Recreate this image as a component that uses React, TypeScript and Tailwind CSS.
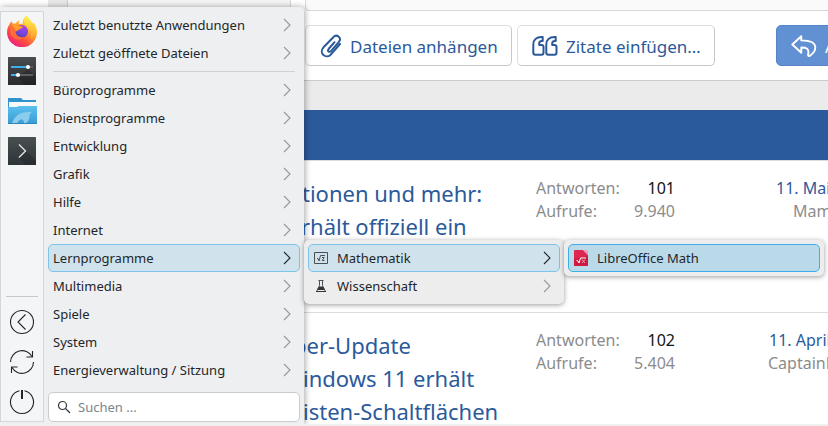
import { useState } from "react";
import type { ReactNode } from "react";

const searchable = [
  "Büroprogramme",
  "Dienstprogramme",
  "Entwicklung",
  "Grafik",
  "Hilfe",
  "Internet",
  "Lernprogramme",
  "Multimedia",
  "Spiele",
  "System",
  "Energieverwaltung / Sitzung",
];

const threads = [
  {
    lines: [
      { text: "tionen und mehr:", pad: "pl-[10px]" },
      { text: "rhält offiziell ein", pad: "pl-[9px]" },
    ],
    replies: "101",
    views: "9.940",
    date: "11. Mai",
    datePad: "pl-2",
    author: "Mam",
    authorPad: "pl-[25px]",
  },
  {
    lines: [
      { text: "ber-Update", pad: "pl-px" },
      { text: "indows 11 erhält", pad: "pl-[11px]" },
      { text: "isten-Schaltflächen", pad: "pl-[11px]" },
    ],
    replies: "102",
    views: "5.404",
    date: "11. April",
    datePad: "pl-px",
    author: "CaptainP",
    authorPad: "pl-0",
  },
];

export default function App() {
  return (
    <div className="relative h-screen overflow-hidden bg-white border-b-2 border-[#f0f0f0] font-['Noto_Sans',sans-serif]">
      <ForumPage />
      <StartMenu />
    </div>
  );
}

function ForumPage() {
  return (
    <main className="h-full overflow-hidden flex flex-col">
      <div className="flex h-[11px] shrink-0">
        <div className="w-12" />
        <div className="w-5 bg-[#e8e8e8] border-r border-[#d0d0d0]" />
        <div className="w-[223px] bg-[#f4f4f4] border-r border-[#d8d8d8]" />
        <div className="w-[14px]" />
        <div className="flex-1 bg-[#fafafa] border-l border-b border-[#d8d8d8] rounded-bl" />
      </div>

      <div className="flex shrink-0 pt-[14px] pb-[14px] pl-[305px] border-b border-[#cbcbcb] text-[17px] text-[#2b5a9b]">
        <button className="flex items-center h-[41px] w-[207px] pl-[14px] gap-2 shrink-0 border border-[#dedede] border-b-[#c8c8c8] border-r-[#c8c8c8] rounded-[5px] whitespace-nowrap">
          <ClipIcon /> <span className="pt-0.5">Dateien anhängen</span>
        </button>
        <button className="flex items-center h-[41px] w-[198px] ml-[5px] pl-[14px] gap-2 shrink-0 border border-[#dedede] border-b-[#c8c8c8] border-r-[#c8c8c8] rounded-[5px] whitespace-nowrap">
          <QuoteIcon /> <span className="pt-0.5">Zitate einfügen…</span>
        </button>
        <button className="flex items-center h-[41px] w-[150px] ml-[61px] pl-[14px] gap-2 shrink-0 bg-[#6190d3] border border-[#5584c8] rounded-[5px] text-white whitespace-nowrap">
          <ReplyIcon /> <span className="pt-0.5">Antworten</span>
        </button>
      </div>

      <div className="h-[29px] shrink-0 bg-[#ebebeb]" />
      <div className="h-[50px] shrink-0 bg-[#2b5a9b]" />

      {threads.map((t) => (
        <article key={t.replies} className="flex h-[152px] shrink-0 pt-4 pl-[292px] border-t border-[#dcdcdc]">
          <h3 className="w-[244px] shrink-0">
            <a href="#" className="block text-[22px] leading-[33px] text-[#2b5a9b] whitespace-nowrap">
              {t.lines.map((l) => (
                <span key={l.text} className={`block ${l.pad}`}>{l.text}</span>
              ))}
            </a>
          </h3>
          <dl className="grid grid-cols-[auto_auto] content-start justify-between w-[139px] shrink-0 text-[16px] leading-[23px] text-[#8c8c8c]">
            <dt>Antworten:</dt>
            <dd className="text-right text-[#141414]">{t.replies}</dd>
            <dt>Aufrufe:</dt>
            <dd className="text-right">{t.views}</dd>
          </dl>
          <div className="flex-1 pl-[93px] overflow-hidden text-[16px] leading-[23px] whitespace-nowrap text-[#8c8c8c]">
            <a href="#" className={`block text-[#2b5a9b] ${t.datePad}`}>{t.date}</a>
            <span className={`block ${t.authorPad}`}>{t.author}</span>
          </div>
        </article>
      ))}
    </main>
  );
}

function StartMenu() {
  const [query, setQuery] = useState("");

  return (
    <nav className="absolute left-0 top-[7px] w-[304px] flex gap-1 pt-1 pb-[3px] pr-1 bg-[#edeff1] rounded-tr text-[13px] text-[#232629] shadow-[1px_0_6px_rgba(0,0,0,0.35)]">
      <div className="w-11 shrink-0 flex flex-col items-center bg-[#f4f5f7] border border-[#d4d6d8]">
        <div className="flex flex-col gap-[10px] pt-1">
          <SideBtn label="Firefox"><FirefoxIcon /></SideBtn>
          <SideBtn label="Systemeinstellungen"><SettingsIcon /></SideBtn>
          <SideBtn label="Dolphin"><FolderIcon /></SideBtn>
          <SideBtn label="Konsole"><TerminalIcon /></SideBtn>
        </div>
        <div className="mt-auto w-8 border-t border-[#c6c8ca]" />
        <div className="flex flex-col gap-[10px] pt-[10px] pb-1">
          <SideBtn label="Abmelden"><LogoutIcon /></SideBtn>
          <SideBtn label="Neu starten"><RestartIcon /></SideBtn>
          <SideBtn label="Herunterfahren"><PowerIcon /></SideBtn>
        </div>
      </div>

      <div className="flex-1">
        <MenuItem label="Zuletzt benutzte Anwendungen" />
        <MenuItem label="Zuletzt geöffnete Dateien" />
        <hr className="mx-[5px] my-1 border-[#cfd1d3]" />
        {searchable.map((label) => (
          <div key={label} className="relative">
            <MenuItem label={label} active={label === "Lernprogramme"} />
            {label === "Lernprogramme" && (
              <Submenu>
                <div className="relative">
                  <MenuItem label="Mathematik" icon={<MathIcon />} active />
                  <Submenu>
                    <button className="w-full h-7 flex items-center gap-2 px-1 bg-[#badaea] border border-[#3daee9] rounded-[5px]">
                      <LibreMathIcon />
                      <span className="pt-0.5">LibreOffice Math</span>
                    </button>
                  </Submenu>
                </div>
                <MenuItem label="Wissenschaft" icon={<FlaskIcon />} />
              </Submenu>
            )}
          </div>
        ))}
        <label className="mt-2 h-[30px] flex items-center gap-[7px] px-2 bg-white border border-[#c9cbcd] rounded-[5px]">
          <SearchIcon />
          <input
            value={query}
            onChange={(e) => setQuery(e.target.value)}
            aria-label="Suchen"
            placeholder="Suchen ..."
            className="flex-1 min-w-0 pt-0.5 outline-none placeholder:text-[#7b858e]"
          />
        </label>
      </div>
    </nav>
  );
}

function Submenu({ children }: { children: ReactNode }) {
  return (
    <div className="absolute left-[256px] -top-1 z-10 w-[260px] p-1 bg-[#ededee] rounded-[5px] shadow-[0_1px_5px_rgba(0,0,0,0.4)]">
      {children}
    </div>
  );
}

function MenuItem({ label, icon, active }: { label: string; icon?: ReactNode; active?: boolean }) {
  return (
    <button
      className={`w-full h-7 flex items-center gap-2 px-1 border rounded-[5px] whitespace-nowrap
        ${active ? "bg-[#d0e3ed] border-[#7cc4ea]" : "border-transparent"}`}>
      {icon}
      <span className="pt-0.5">{label}</span>
      <svg className={`ml-auto mr-1 ${active ? "text-[#232629]" : "text-[#96989a]"}`} width="8" height="14" viewBox="0 0 8 14" fill="none" stroke="currentColor" strokeWidth="1.1">
        <path d="M1 1l6 6-6 6" />
      </svg>
    </button>
  );
}

function SideBtn({ label, children }: { label: string; children: ReactNode }) {
  return (
    <button aria-label={label} className="w-[30px] h-[30px] flex items-center justify-center">
      {children}
    </button>
  );
}

function FirefoxIcon() {
  return (
    <svg width="32" height="32" viewBox="0 0 32 32" className="shrink-0">
      <defs>
        <linearGradient id="fxBody" x1="0.85" y1="0.1" x2="0.25" y2="0.95">
          <stop offset="0" stopColor="#fff04a" />
          <stop offset="0.4" stopColor="#ffa42e" />
          <stop offset="0.7" stopColor="#ff4f3c" />
          <stop offset="1" stopColor="#ee2080" />
        </linearGradient>
        <radialGradient id="fxGlobe" cx="0.65" cy="0.2" r="0.9">
          <stop offset="0" stopColor="#a33ff0" />
          <stop offset="0.6" stopColor="#7046d8" />
          <stop offset="1" stopColor="#3c3f9e" />
        </radialGradient>
        <linearGradient id="fxTail" x1="0" y1="0" x2="0" y2="1">
          <stop offset="0" stopColor="#fff44f" />
          <stop offset="1" stopColor="#ffa22c" />
        </linearGradient>
      </defs>
      <path d="M4 8.500c.3-1 .9-1.800 1.600-2.500.2 1 .5 1.800 1 2.600 1-.3 2-.3 3 0C10.500 7 12 5.700 13.500 5.200c-.6 1.200-.8 2.500-.6 3.800L17 8.500c-1-2.500 1-6.500 4-8 .8 3 4 5 6 8l.3-1.200c2.300 2.600 3.700 6 3.700 9.700a15 15 0 0 1-30 .500C1 14 2 11 4 8.500z" fill="url(#fxBody)" />
      <path d="M20.800.5c.8 3 4 5 5.800 8 3.500 5.500 2.400 12-2.100 15.500 1.500-4 .8-8-1.500-11-2-2.500-5-3.500-5-6.500 0-2 1.300-4.700 2.800-6z" fill="url(#fxTail)" />
      <circle cx="15.500" cy="16.500" r="6.500" fill="url(#fxGlobe)" />
      <path d="M6 10.500c2.500-1.500 5-1.500 7 .2 1 .8 2.500.8 4 1-.5 1.800-2.700 2-4 2.800-1.300.9-1.500 2-3.500 2 .5 4.500 5 7 9.500 5-3 4-9.500 4-13 0-2.500-3-2.500-8 0-11z" fill="#ff6a39" />
      <path d="M5.500 10c2-1.500 5.500-1.200 7.700.7 1 .8 2.500.8 3.800 1-.7 1.800-3 2-4.500 3-1 .7-1.800 1-3 1-.6-2-2-3.500-4-5.700z" fill="#ff9d2e" />
    </svg>
  );
}

function SettingsIcon() {
  return (
    <svg width="28" height="28" viewBox="0 0 28 28">
      <defs>
        <linearGradient id="setBg" x1="0" y1="0" x2="0" y2="1">
          <stop offset="0" stopColor="#4a4d50" />
          <stop offset="1" stopColor="#2a2c2e" />
        </linearGradient>
      </defs>
      <rect width="28" height="28" rx="0.5" fill="url(#setBg)" />
      <path d="M20 12l8 8v8H16l-6-8z" fill="#000" opacity="0.2" />
      <path d="M3 10h22M3 18h22" stroke="#5b5f62" strokeWidth="2" />
      <path d="M3 10h17M3 18h7" stroke="#3daee9" strokeWidth="2" />
      <circle cx="20" cy="10" r="2" fill="#fff" />
      <circle cx="10" cy="18" r="2" fill="#fff" />
    </svg>
  );
}

function FolderIcon() {
  return (
    <svg width="30" height="28" viewBox="0 0 30 28">
      <defs>
        <linearGradient id="dirBg" x1="0" y1="0" x2="0" y2="1">
          <stop offset="0" stopColor="#5bc0f0" />
          <stop offset="1" stopColor="#3a9bd4" />
        </linearGradient>
      </defs>
      <path d="M1 1h13l2 2h13v12H1z" fill="#3193cb" />
      <path d="M2 5h27v8H2z" fill="#f8f9fa" />
      <path d="M1 10h9l2-1h18v18H1z" fill="url(#dirBg)" />
      <path d="M5 26c2-5 5-9 11-10.500l9-.8c-2 1.500-2.500 3-2.500 5 0 2.500-1.300 5-3.500 6.300h-2c.2-1.500-.5-2.800-2-3.800-2.500.3-4 1.800-4.500 3.800z" fill="#8accec" />
      <path d="M1 26.500h29" stroke="#2d86b8" />
    </svg>
  );
}

function TerminalIcon() {
  return (
    <svg width="28" height="28" viewBox="0 0 28 28">
      <defs>
        <linearGradient id="termBg" x1="0" y1="0" x2="0" y2="1">
          <stop offset="0" stopColor="#485052" />
          <stop offset="1" stopColor="#2e3437" />
        </linearGradient>
      </defs>
      <rect width="28" height="28" rx="0.5" fill="url(#termBg)" />
      <path d="M18 14l10 10v4H18l-7-7z" fill="#000" opacity="0.15" />
      <path d="M11 7.500l6.500 6.500-6.500 6.500" fill="none" stroke="#dfe3e3" strokeWidth="1.400" />
    </svg>
  );
}

function LogoutIcon() {
  return (
    <svg width="26" height="26" viewBox="0 0 26 26" fill="none" stroke="#232629" strokeWidth="1.100">
      <circle cx="13" cy="13" r="11.500" />
      <path d="M16.500 5.500L9 13l7.500 7.500" />
    </svg>
  );
}

function RestartIcon() {
  return (
    <svg width="26" height="26" viewBox="0 0 26 26" fill="none" stroke="#232629" strokeWidth="1.100">
      <path d="M1.500 13A11.500 11.500 0 0 1 23 7.500M24.500 13A11.500 11.500 0 0 1 3 18.500" />
      <path d="M23.500 2v6h-6M2.500 24v-6h6" />
    </svg>
  );
}

function PowerIcon() {
  return (
    <svg width="26" height="26" viewBox="0 0 26 26" fill="none" stroke="#232629">
      <path d="M10.500 1.800a11.500 11.500 0 1 0 5 0" strokeWidth="1.100" />
      <path d="M13 1v9" strokeWidth="2" />
    </svg>
  );
}

function ClipIcon() {
  return (
    <svg width="22" height="24" viewBox="0 0 22 24" fill="none" stroke="currentColor" strokeWidth="2" strokeLinecap="round" strokeLinejoin="round">
      <path d="M14.500 8.200L9 14.500c-1.200 1.400-1.200 2.400-.5 3 .7.600 1.700.5 2.700-.7l7.500-8.600c1.600-1.900 1.500-4.200 0-5.500-1.600-1.400-3.900-1.200-5.400.5L3.500 13.300c-2.200 2.500-2.200 5.900-.1 7.800 2.200 1.900 5.500 1.600 7.600-.8l9-10.300" />
    </svg>
  );
}

function QuoteIcon() {
  return (
    <svg width="26" height="22" viewBox="0 0 26 22" fill="none" stroke="currentColor" strokeWidth="2" strokeLinejoin="round">
      <path d="M9.500 2h1.200v4H9.600C8 6 7.200 7 7.200 8.500V10h2.300c1.300 0 2 .8 2 2v5.500c0 1.400-.8 2.200-2 2.200H3.300c-1.300 0-2-.8-2-2.200V9.500C1.300 5 4.500 2 9.500 2z" />
      <path d="M22.500 2h1.200v4h-1.100c-1.600 0-2.400 1-2.400 2.500V10h2.300c1.300 0 2 .8 2 2v5.500c0 1.400-.8 2.200-2 2.200h-6.200c-1.300 0-2-.8-2-2.200V9.500c0-4.500 3.200-7.500 8.200-7.500z" />
    </svg>
  );
}

function ReplyIcon() {
  return (
    <svg width="26" height="24" viewBox="0 0 26 24" fill="none" stroke="currentColor" strokeWidth="1.900" strokeLinejoin="round">
      <path d="M10.300 2.200L1.300 10.500l9 8.300v-5.300c5 0 8.200 1 6.800 7-.2 1.400.8 1.900 1.800 1.200 3.200-2.200 5.400-5 5.400-8 0-5-4.500-7.300-14-7.300z" />
    </svg>
  );
}

function SearchIcon() {
  return (
    <svg width="14" height="14" viewBox="0 0 14 14" fill="none" stroke="#33373a" strokeWidth="1.200">
      <circle cx="5.500" cy="5.500" r="4" />
      <path d="M8.500 8.500l4.500 4.500" />
    </svg>
  );
}

function MathIcon() {
  return (
    <svg width="16" height="16" viewBox="0 0 16 16" fill="none" stroke="#4a5054">
      <path d="M1.500 2.500h13v11h-13z" />
      <path d="M4 8.500h1l1 2.500 1.500-5.500H12M9 7.500h2.200L9.200 10.500H11.500" />
    </svg>
  );
}

function FlaskIcon() {
  return (
    <svg width="16" height="16" viewBox="0 0 16 16">
      <path d="M5.500 2.500h5M6.500 2.500v5l-3 6h9l-3-6v-5" fill="none" stroke="#4a5054" />
      <path d="M6 8.500h4l1.800 3.500H4.200z" fill="#31363b" />
      <path d="M3 13.500h10" stroke="#31363b" />
    </svg>
  );
}

function LibreMathIcon() {
  return (
    <svg width="16" height="16" viewBox="0 0 16 16">
      <path d="M2 0h8l5 5v10a1 1 0 0 1-1 1H2a1 1 0 0 1-1-1V1a1 1 0 0 1 1-1z" fill="#dc2850" />
      <path d="M1 9l14-3v9a1 1 0 0 1-1 1H2a1 1 0 0 1-1-1z" fill="#c8143c" opacity="0.7" />
      <path d="M10 0h4a1 1 0 0 1 1 1v4z" fill="#f39cb2" />
      <path d="M3.500 10.500h1l1.500 2.500 1.500-5H13" fill="none" stroke="#fff" />
      <path d="M9 9.500l3 3.500M12 9.500l-3 3.500" stroke="#f09ab0" />
    </svg>
  );
}
